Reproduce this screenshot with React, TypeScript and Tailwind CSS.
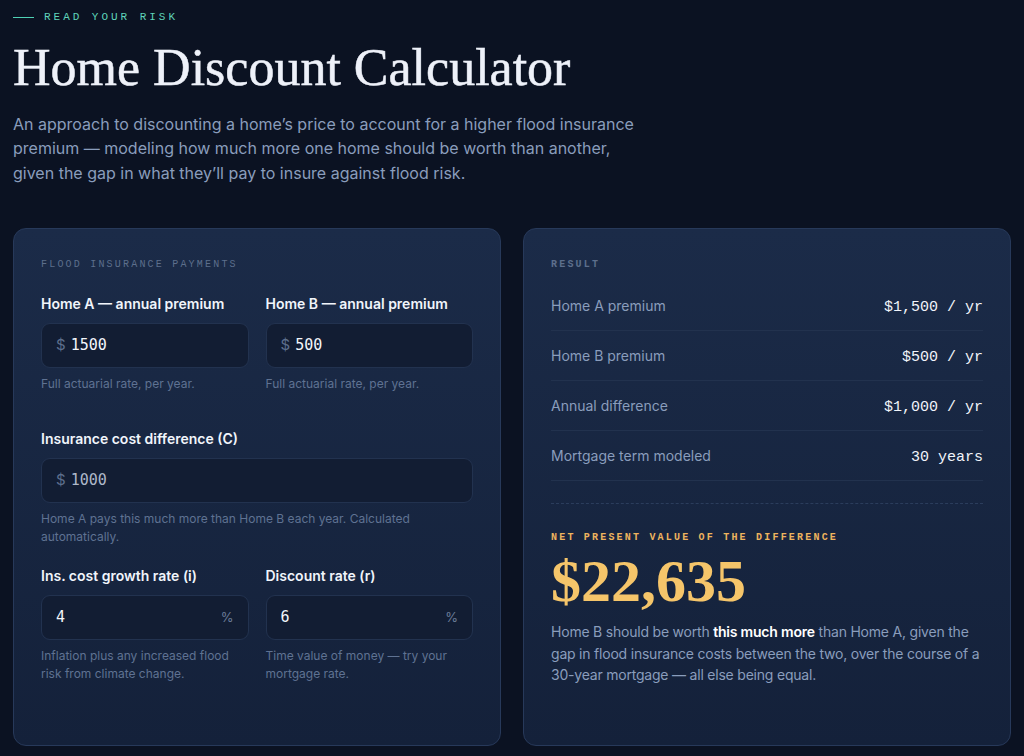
import React from "react";

const mono = "font-['Liberation_Mono','DejaVu_Sans_Mono',monospace]";
const sans = "font-['Inter','Noto_Sans',sans-serif]";
const serif = "font-['Liberation_Serif','DejaVu_Serif',serif]";

const RESULT_ROWS = [
  { label: "Home A premium", value: "$1,500 / yr" },
  { label: "Home B premium", value: "$500 / yr" },
  { label: "Annual difference", value: "$1,000 / yr" },
  { label: "Mortgage term modeled", value: "30 years" },
];

function Field({
  label,
  value,
  prefix,
  suffix,
  help,
  muted,
}: {
  label: string;
  value: string;
  prefix?: string;
  suffix?: string;
  help: string;
  muted?: boolean;
}) {
  return (
    <div className="flex flex-col">
      <div className="text-[14px] font-semibold text-[#f1f5fb] leading-[20px]">{label}</div>
      <div className="mt-[9px] flex h-[45px] items-center rounded-[9px] border border-[#22324f] bg-[#121d33] px-[14px]">
        {prefix && <span className="mr-[5px] text-[15px] text-[#5d6f8d]">{prefix}</span>}
        <span
          className={`flex-1 font-['DejaVu_Sans_Mono',monospace] text-[15px] ${
            muted ? "text-[#aeb8c9]" : "text-[#f3f6fb]"
          }`}
        >
          {value}
        </span>
        {suffix && <span className="text-[13px] text-[#6b7c98]">{suffix}</span>}
      </div>
      <div className="mt-[7px] text-[12px] leading-[18px] text-[#5f7292]">{help}</div>
    </div>
  );
}

export default function App() {
  return (
    <div className={`${sans} min-h-[756px] w-[1024px] overflow-hidden bg-[#0b1222] px-[13px]`}>
      {/* Header */}
      <div className="flex items-center gap-[10px] pt-[9px]">
        <span className="h-px w-[21px] bg-[#4fd1b5]" />
        <span className={`${mono} text-[11px] tracking-[0.27em] text-[#5fd4ba]`}>READ YOUR RISK</span>
      </div>
      <h1
        className={`${serif} mt-[14px] text-[52px] leading-[56px] text-[#eef1f9] [-webkit-text-stroke:0.5px_#eef1f9]`}
      >
        Home Discount Calculator
      </h1>
      <p className="mt-[16px] max-w-[640px] text-[16px] leading-[24.5px] text-[#8a9dbc]">
        An approach to discounting a home’s price to account for a higher flood insurance premium —
        modeling how much more one home should be worth than another, given the gap in what they’ll
        pay to insure against flood risk.
      </p>

      <div className="mt-[43px] grid grid-cols-2 gap-[22px]">
        {/* Inputs */}
        <div className="h-[518px] rounded-[13px] border border-[#27395a] bg-gradient-to-b from-[#1b2b48] to-[#14213a] px-[27px] pt-[28px]">
          <div className={`${mono} text-[10px] tracking-[0.22em] text-[#5d6f8c]`}>FLOOD INSURANCE PAYMENTS</div>
          <div className="mt-[22px] grid grid-cols-2 gap-[17px]">
            <Field label="Home A — annual premium" prefix="$" value="1500" help="Full actuarial rate, per year." />
            <Field label="Home B — annual premium" prefix="$" value="500" help="Full actuarial rate, per year." />
          </div>
          <div className="mt-[36px]">
            <Field
              label="Insurance cost difference (C)"
              prefix="$"
              value="1000"
              muted
              help="Home A pays this much more than Home B each year. Calculated automatically."
            />
          </div>
          <div className="mt-[20px] grid grid-cols-2 gap-[17px]">
            <Field
              label="Ins. cost growth rate (i)"
              value="4"
              suffix="%"
              help="Inflation plus any increased flood risk from climate change."
            />
            <Field
              label="Discount rate (r)"
              value="6"
              suffix="%"
              help="Time value of money — try your mortgage rate."
            />
          </div>
        </div>

        {/* Results */}
        <div className="h-[518px] rounded-[13px] border border-[#27395a] bg-gradient-to-b from-[#1b2b48] to-[#14213a] px-[27px] pt-[28px]">
          <div className={`${mono} text-[10px] font-bold tracking-[0.22em] text-[#5d6f8c]`}>RESULT</div>
          <div className="mt-[9px]">
            {RESULT_ROWS.map((row) => (
              <div
                key={row.label}
                className="flex h-[50px] items-center justify-between border-b border-[#22324e]"
              >
                <span className="text-[14px] text-[#8a9dbc]">{row.label}</span>
                <span className={`${mono} pt-[6px] text-[15px] text-[#f1f4fa]`}>{row.value}</span>
              </div>
            ))}
          </div>
          <div className="mt-[22px] border-t border-dashed border-[#2b3d5c]" />
          <div className={`${mono} mt-[26px] text-[10px] font-bold tracking-[0.22em] text-[#eeb45e]`}>
            NET PRESENT VALUE OF THE DIFFERENCE
          </div>
          <div className={`${serif} mt-[4px] text-[60px] font-bold leading-[64px] text-[#f5c56a]`}>$22,635</div>
          <p className="mt-[8px] mr-[-4px] text-[14px] leading-[21.5px] tracking-[-0.015em] text-[#8a9dbc]">
            Home B should be worth <span className="font-semibold text-[#ffffff]">this much more</span> than
            Home A, given the gap in flood insurance costs between the two, over the course of a 30-year
            mortgage — all else being equal.
          </p>
        </div>
      </div>
    </div>
  );
}
